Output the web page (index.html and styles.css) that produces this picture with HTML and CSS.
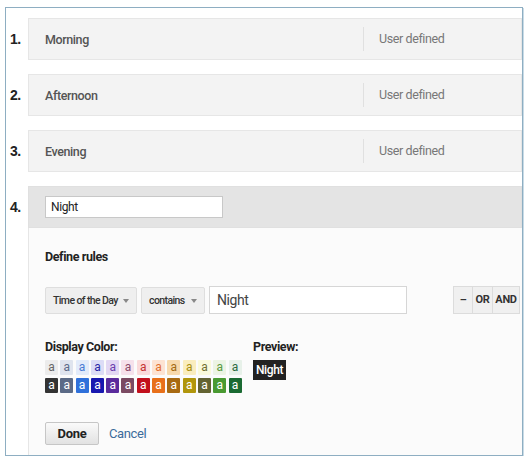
FILE: index.html
```html
<!DOCTYPE html>
<html>
<head>
<meta charset="utf-8">
<link rel="stylesheet" href="styles.css">
</head>
<body>
<div class="panel">
  <div class="item">
    <div class="num">1.</div>
    <div class="row"><span class="name">Morning</span><span class="type">User defined</span></div>
  </div>
  <div class="item">
    <div class="num">2.</div>
    <div class="row"><span class="name">Afternoon</span><span class="type">User defined</span></div>
  </div>
  <div class="item">
    <div class="num">3.</div>
    <div class="row"><span class="name">Evening</span><span class="type">User defined</span></div>
  </div>
  <div class="item open">
    <div class="num">4.</div>
    <div class="editor">
      <div class="row head"><div class="name-input">Night</div></div>
      <div class="body">
        <div class="heading">Define rules</div>
        <div class="rule">
          <div class="select sel-dim">Time of the Day <span class="arrow"></span></div>
          <div class="select sel-op">contains <span class="arrow"></span></div>
          <div class="value">Night</div>
          <div class="logic"><span class="lb minus">–</span><span class="lb or">OR</span><span class="lb and">AND</span></div>
        </div>
        <div class="colors">
          <div class="col-left">
            <div class="heading">Display Color:</div>
            <div class="swatches">
              <span class="sw" style="background:#ececec;color:#666">a</span>
              <span class="sw" style="background:#dfe4ee;color:#5b6a88">a</span>
              <span class="sw" style="background:#e2ebfa;color:#4a7cd4">a</span>
              <span class="sw" style="background:#dcdcf6;color:#2828a6">a</span>
              <span class="sw" style="background:#e2d7f3;color:#6a3fae">a</span>
              <span class="sw" style="background:#f6e1eb;color:#8c4c6c">a</span>
              <span class="sw" style="background:#fadada;color:#c43232">a</span>
              <span class="sw" style="background:#fde3d2;color:#e27030">a</span>
              <span class="sw" style="background:#f7d9ac;color:#a26a12">a</span>
              <span class="sw" style="background:#faedbe;color:#a88f10">a</span>
              <span class="sw" style="background:#fafadb;color:#707032">a</span>
              <span class="sw" style="background:#ecf4e4;color:#5a9a42">a</span>
              <span class="sw" style="background:#e7f1e9;color:#2a6a42">a</span>
              <span class="sw" style="background:#333333;color:#fff">a</span>
              <span class="sw" style="background:#5b6a86;color:#fff">a</span>
              <span class="sw" style="background:#2f70da;color:#fff">a</span>
              <span class="sw" style="background:#1818b0;color:#fff">a</span>
              <span class="sw" style="background:#5a2b9c;color:#fff">a</span>
              <span class="sw" style="background:#7b4a62;color:#fff">a</span>
              <span class="sw" style="background:#c2101c;color:#fff">a</span>
              <span class="sw" style="background:#e8701a;color:#fff">a</span>
              <span class="sw" style="background:#a86a12;color:#fff">a</span>
              <span class="sw" style="background:#b1960c;color:#fff">a</span>
              <span class="sw" style="background:#636332;color:#fff">a</span>
              <span class="sw" style="background:#4a9a32;color:#fff">a</span>
              <span class="sw" style="background:#1a6a32;color:#fff">a</span>
            </div>
          </div>
          <div class="col-right">
            <div class="heading">Preview:</div>
            <div class="preview">Night</div>
          </div>
        </div>
        <div class="actions">
          <button class="done">Done</button>
          <span class="cancel">Cancel</span>
        </div>
      </div>
    </div>
  </div>
</div>
</body>
</html>
```
FILE: styles.css
```css
html, body {
  margin: 0;
  padding: 0;
  background: #ffffff;
}
body {
  font-family: Roboto, "Liberation Sans", Arial, sans-serif;
  font-size: 12.5px;
  letter-spacing: -0.4px;
  color: #333;
}
.panel {
  margin: 7px 0 0 5px;
  width: 516px;
  height: 437px;
  border: 1px solid #8eaec2;
  box-shadow: 1px 1px 0 #c9dbe6;
  padding-top: 10px;
  display: flex;
  flex-direction: column;
  gap: 14px;
}
.item {
  display: flex;
  align-items: flex-start;
}
.num {
  flex: none;
  width: 22px;
  padding-left: 4px;
  box-sizing: border-box;
  height: 42px;
  line-height: 42px;
  font-weight: bold;
  font-size: 14px;
  letter-spacing: -0.5px;
  color: #222;
  font-family: "Liberation Sans", Arial, sans-serif;
}
.row {
  flex: 1;
  height: 42px;
  box-sizing: border-box;
  background: #f3f3f3;
  border: 1px solid #e6e6e6;
  display: flex;
  align-items: center;
  padding-left: 16px;
}
.name {
  width: 318px;
  color: #555;
  font-weight: 500;
}
.type {
  border-left: 1px solid #e0e0e0;
  padding-left: 15px;
  height: 24px;
  line-height: 24px;
  color: #777;
}
.editor {
  flex: 1;
  min-width: 0;
  display: flex;
  flex-direction: column;
}
.head {
  flex: none;
  background: #e4e4e4;
  border-color: #e0e0e0;
}
.name-input {
  width: 178px;
  height: 22px;
  box-sizing: border-box;
  background: #fff;
  border: 1px solid #c8c8c8;
  line-height: 20px;
  padding-left: 5px;
  font-size: 12px;
  color: #222;
}
.body {
  flex: none;
  background: #fbfbfb;
  border-left: 1px solid #e6e6e6;
  height: 227px;
  box-sizing: border-box;
  padding: 20px 0 0 16px;
}
.heading {
  font-weight: bold;
  color: #222;
  line-height: 18px;
  height: 18px;
  white-space: nowrap;
}
.rule {
  display: flex;
  align-items: center;
  margin-top: 20px;
  height: 28px;
  white-space: nowrap;
}
.select {
  flex: none;
  height: 27px;
  box-sizing: border-box;
  background: #efefef;
  border: 1px solid #dedede;
  border-radius: 2px;
  display: flex;
  align-items: center;
  justify-content: space-between;
  padding: 0 7px;
  font-size: 10.5px;
  font-weight: 500;
  letter-spacing: -0.6px;
  color: #333;
}
.sel-dim { width: 92px; }
.sel-op { width: 64px; margin-left: 4px; }
.arrow {
  width: 0;
  height: 0;
  border-left: 3px solid transparent;
  border-right: 3px solid transparent;
  border-top: 4px solid #888;
  margin-top: 2px;
}
.value {
  flex: none;
  margin-left: 4px;
  width: 198px;
  height: 28px;
  box-sizing: border-box;
  background: #fff;
  border: 1px solid #d6d6d6;
  line-height: 26px;
  padding-left: 7px;
  font-size: 14px;
  color: #444;
}
.logic {
  flex: none;
  margin-left: 46px;
  display: flex;
  height: 26px;
  border: 1px solid #dcdcdc;
  background: #f0f0f0;
}
.lb {
  font-size: 11px;
  font-weight: bold;
  letter-spacing: -0.3px;
  color: #333;
  line-height: 26px;
  padding: 0;
  box-sizing: border-box;
  border-left: 1px solid #dcdcdc;
  text-align: center;
}
.lb.minus {
  border-left: none;
  width: 18px;
}
.lb.or { width: 20px; }
.lb.and { width: 27px; }
.colors {
  display: flex;
  margin-top: 24px;
  gap: 10px;
}
.swatches {
  margin-top: 4px;
  width: 198px;
  display: grid;
  grid-template-columns: repeat(13, 13px);
  column-gap: 2.3px;
  row-gap: 3px;
}
.sw {
  height: 15px;
  line-height: 15px;
  text-align: center;
  font-size: 12px;
  letter-spacing: 0;
  border-radius: 1px;
}
.preview {
  margin-top: 4px;
  display: inline-block;
  background: #222;
  color: #fff;
  font-size: 12px;
  font-weight: 500;
  padding: 0 3px;
  height: 20px;
  line-height: 20px;
}
.actions {
  margin-top: 29px;
  display: flex;
  align-items: center;
  gap: 10px;
}
.done {
  width: 54px;
  height: 23px;
  border: 1px solid #c6c6c6;
  border-radius: 2px;
  background: linear-gradient(#fafafa, #e2e2e2);
  font-family: Roboto, "Liberation Sans", Arial, sans-serif;
  font-size: 13px;
  font-weight: bold;
  letter-spacing: -0.3px;
  color: #222;
  padding: 0;
}
.cancel {
  color: #3b6c9c;
  font-size: 13px;
}
```
